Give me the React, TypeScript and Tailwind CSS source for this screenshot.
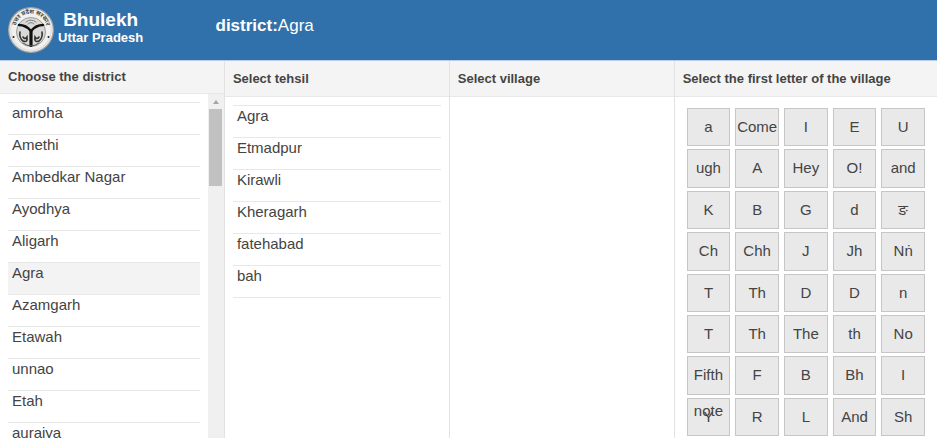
import type React from 'react';

const districts = [
  'amroha',
  'Amethi',
  'Ambedkar Nagar',
  'Ayodhya',
  'Aligarh',
  'Agra',
  'Azamgarh',
  'Etawah',
  'unnao',
  'Etah',
  'auraiya',
];

const tehsils = ['Agra', 'Etmadpur', 'Kirawli', 'Kheragarh', 'fatehabad', 'bah'];

const letters = [
  'a', 'Come', 'I', 'E', 'U',
  'ugh', 'A', 'Hey', 'O!', 'and',
  'K', 'B', 'G', 'd', 'ङ',
  'Ch', 'Chh', 'J', 'Jh', 'Nṅ',
  'T', 'Th', 'D', 'D', 'n',
  'T', 'Th', 'The', 'th', 'No',
  'Fifth note', 'F', 'B', 'Bh', 'I',
  'Y', 'R', 'L', 'And', 'Sh',
];

const Emblem: React.FC = () => (
  <svg viewBox="0 0 46 46" className="h-[46px] w-[46px] shrink-0" role="img" aria-label="Uttar Pradesh emblem">
    <defs>
      <path id="emblem-arc" d="M7.5 22 A15.5 15.5 0 0 1 38.5 22" />
    </defs>
    <circle cx="23" cy="23" r="22.3" fill="#f1f1ef" stroke="#a4a6a6" strokeWidth="1.2" />
    <circle cx="23" cy="23" r="20.3" fill="none" stroke="#c9c9c7" strokeWidth="0.6" />
    <text fontSize="6" fontWeight="700" fill="#444" textAnchor="middle">
      <textPath href="#emblem-arc" startOffset="50%">उत्तर प्रदेश सरकार</textPath>
    </text>
    <circle cx="23" cy="25" r="14.5" fill="#d9dad8" stroke="#8a8a8a" strokeWidth="0.8" />
    <g fill="none" stroke="#111" strokeLinecap="round">
      <path d="M11 18 Q18 18 23 24 Q28 18 35 18" strokeWidth="2.6" />
      <path d="M23 24 V38.5" strokeWidth="3.2" />
      <path d="M12 25 Q11 31 15 34 Q20 36 19 30 Q17 33 15 30" stroke="#333" strokeWidth="1.6" />
      <path d="M34 25 Q35 31 31 34 Q26 36 27 30 Q29 33 31 30" stroke="#333" strokeWidth="1.6" />
      <path d="M18 15 Q23 11 28 15 M20 17 Q23 14 26 17" stroke="#777" strokeWidth="0.9" />
      <path d="M15 36 Q23 42 31 36" stroke="#555" strokeWidth="1" />
    </g>
    <circle cx="5.5" cy="30" r="1" fill="#222" />
    <circle cx="40.5" cy="30" r="1" fill="#222" />
  </svg>
);

type PanelProps = {
  title: string;
  compact?: boolean;
  last?: boolean;
  children?: React.ReactNode;
};

const Panel: React.FC<PanelProps> = ({ title, compact, last, children }) => (
  <section className={`flex min-h-0 min-w-0 flex-col ${last ? '' : 'border-r border-[#e2e2e2]'}`}>
    <h2
      className={`shrink-0 border-b border-[#e8e8e8] bg-[#f4f4f4] px-2 text-[13px] font-bold ${
        compact ? 'h-[33px] leading-[31px]' : 'h-9 leading-[35px]'
      }`}
    >
      {title}
    </h2>
    {children}
  </section>
);

type NameListProps = {
  names: string[];
  selected?: string;
};

const NameList: React.FC<NameListProps> = ({ names, selected }) => (
  <ul className="border-t border-[#e8e8e8]">
    {names.map((name) => (
      <li key={name} className="h-8 border-b border-[#e8e8e8]">
        <button
          type="button"
          className={`block h-full w-full px-1 pb-3 text-left text-[15px] leading-[19px] ${
            name === selected ? 'bg-[#f3f3f3]' : ''
          }`}
        >
          {name}
        </button>
      </li>
    ))}
  </ul>
);

const App: React.FC = () => {
  return (
    <div className="flex h-screen flex-col overflow-hidden bg-white font-['Liberation_Sans','Noto_Sans',sans-serif] text-[#444]">
      {/* Header */}
      <header className="grid h-[61px] shrink-0 grid-cols-[23%_1fr] border-b border-[#bccbe4] bg-[#3171ab] text-white">
        <div className="flex items-center gap-1 pl-2">
          <Emblem />
          <div className="pb-1 text-center font-bold">
            <h1 className="text-[19px] leading-5">Bhulekh</h1>
            <p className="text-[13px] leading-4">Uttar Pradesh</p>
          </div>
        </div>
        <p className="pt-4 text-[17px] leading-5">
          <strong>district:</strong>Agra
        </p>
      </header>

      {/* Selection panels */}
      <main className="grid min-h-0 flex-1 grid-cols-[24%_24%_24%_1fr]">
        <Panel title="Choose the district" compact>
          <div className="flex min-h-0 flex-1">
            <div className="min-w-0 flex-1 overflow-hidden px-2 pt-2">
              <NameList names={districts} selected="Agra" />
            </div>
            <div className="flex w-4 shrink-0 flex-col items-center bg-[#f0f0f0]" aria-hidden="true">
              <svg viewBox="0 0 16 15" className="h-[15px] w-4 shrink-0">
                <path d="M5 10 L8 6 L11 10 Z" fill="#a3a3a3" />
              </svg>
              <div className="h-[77px] w-[13px] shrink-0 bg-[#c1c1c1]" />
            </div>
          </div>
        </Panel>

        <Panel title="Select tehsil">
          <div className="px-2 pt-2">
            <NameList names={tehsils} />
          </div>
        </Panel>

        <Panel title="Select village" />

        <Panel title="Select the first letter of the village" last>
          <div className="grid min-h-0 flex-1 grid-cols-5 grid-rows-8 gap-x-[5px] gap-y-[3px] pt-[11px] pr-3 pb-[2px] pl-3">
            {letters.map((letter, index) => (
              <button
                key={index}
                type="button"
                className={`flex min-h-0 min-w-0 items-start justify-center border border-[#c6c6c6] bg-[#e9e9e9] text-center text-[15px] leading-9 ${
                  letter.includes(' ') ? 'relative z-10' : ''
                }`}
              >
                {letter}
              </button>
            ))}
          </div>
        </Panel>
      </main>
    </div>
  );
};

export default App;
